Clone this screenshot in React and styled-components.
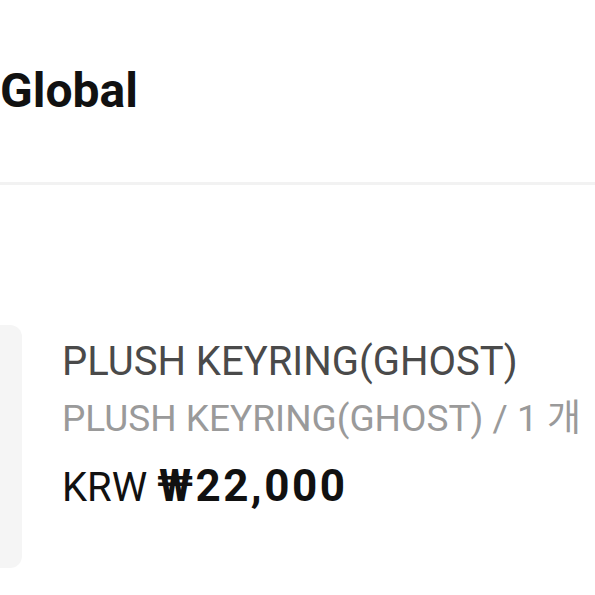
import React from "react";
import styled, { createGlobalStyle } from "styled-components";

const Global = createGlobalStyle`
  html, body { margin: 0; padding: 0; background: #fff; }
  body { font-family: Roboto, "Noto Sans CJK KR", sans-serif; overflow: hidden; }
`;

const Page = styled.div`
  width: 595px;
  height: 595px;
  display: flex;
  flex-direction: column;
  background: #fff;
`;

const Header = styled.header`
  height: 185px;
  display: flex;
  align-items: flex-start;
  padding-top: 63px;
  box-sizing: border-box;
  border-bottom: 3px solid #f2f2f2;
`;

const Title = styled.h1`
  margin: 0;
  font-size: 48px;
  line-height: 56px;
  font-weight: 700;
  color: #111;
`;

const Item = styled.section`
  display: flex;
  gap: 40px;
  margin-top: 140px;
  align-items: flex-start;
`;

const Thumb = styled.div`
  width: 22px;
  height: 243px;
  flex: none;
  background: #f5f5f5;
  border-radius: 0 12px 12px 0;
`;

const Info = styled.div`
  display: flex;
  flex-direction: column;
  padding-top: 13px;
`;

const Name = styled.div`
  font-size: 40px;
  line-height: 48px;
  color: #4a4a4a;
  white-space: nowrap;
`;

const Option = styled.div`
  font-size: 37px;
  line-height: 44px;
  margin-top: 11px;
  color: #9a9a9a;
  white-space: nowrap;
`;

const Price = styled.div`
  font-size: 40px;
  line-height: 48px;
  margin-top: 21px;
  color: #111;
  white-space: nowrap;
`;

const Amount = styled.b`
  font-weight: 700;
  font-size: 44px;
  letter-spacing: 2.5px;
`;

export default function App() {
  return (
    <Page>
      <Global />
      <Header>
        <Title>Global</Title>
      </Header>
      <Item>
        <Thumb />
        <Info>
          <Name>PLUSH KEYRING(GHOST)</Name>
          <Option>PLUSH KEYRING(GHOST) / 1 개</Option>
          <Price>
            KRW <Amount>₩22,000</Amount>
          </Price>
        </Info>
      </Item>
    </Page>
  );
}
